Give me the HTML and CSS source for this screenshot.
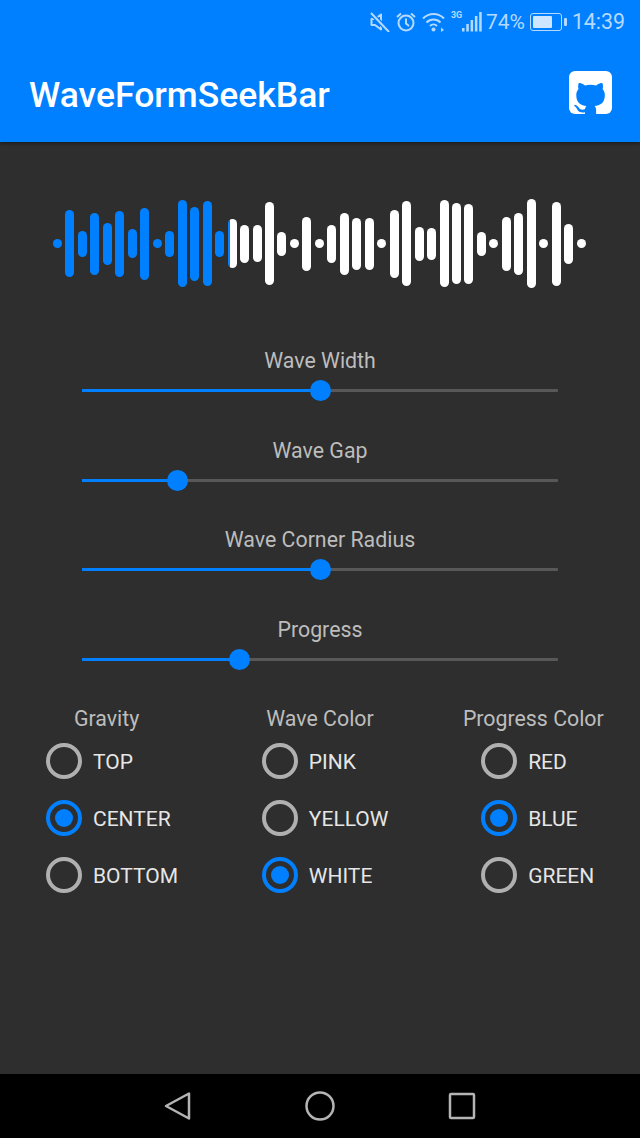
FILE: index.html
```html
<!DOCTYPE html>
<html lang="en">
<head>
  <meta charset="UTF-8">
  <title>WaveFormSeekBar</title>
  <link rel="stylesheet" href="styles.css">
</head>
<body>
  <div class="app">
    <div class="status-bar">
      <svg class="status-icon" width="20" height="20" viewBox="0 0 20 20" fill="none" stroke="currentColor" stroke-width="2">
        <path d="M1.500 7v6h3.500l6 4.500V2.500l-6 4.500z" stroke-linejoin="round"/>
        <path d="M1 1l18 19" stroke="#0080ff" stroke-width="4.500"/>
        <path d="M1 1l18 19"/>
      </svg>
      <svg class="status-icon" width="20" height="20" viewBox="0 0 20 20" fill="none" stroke="currentColor" stroke-width="2">
        <circle cx="10" cy="11" r="7.500"/>
        <path d="M10 6.500V11.500l3 2.500"/>
        <path d="M1 5l4-3.500M19 5l-4-3.500"/>
      </svg>
      <svg class="status-icon" width="23" height="20" viewBox="0 0 23 20" fill="none" stroke="currentColor" stroke-width="2">
        <path d="M1 6.500c6-6 15-6 21 0"/>
        <path d="M4.500 10.500c4-4 10-4 14 0"/>
        <path d="M8 14c2-2 5-2 7 0"/>
        <circle cx="11.500" cy="17.500" r="2" fill="currentColor" stroke="none"/>
        <path d="M19 15.500l3 2.500-3 2z" fill="currentColor" stroke="none"/>
      </svg>
      <div class="net">
        <span class="net-label">3G</span>
        <svg width="20" height="20" viewBox="0 0 20 20" fill="currentColor">
          <rect x="0" y="16" width="2.500" height="3.500"/>
          <rect x="4.300" y="12" width="2.500" height="7.500"/>
          <rect x="8.600" y="8" width="2.500" height="11.500"/>
          <rect x="12.900" y="4" width="2.500" height="15.500"/>
          <rect x="17.200" y="0" width="2.500" height="19.500"/>
        </svg>
      </div>
      <span class="battery-pct">74%</span>
      <div class="battery">
        <div class="battery-body"><div class="battery-level"></div></div>
        <div class="battery-nub"></div>
      </div>
      <span class="clock">14:39</span>
    </div>

    <div class="toolbar">
      <h1>WaveFormSeekBar</h1>
      <svg class="github" width="43" height="43" viewBox="0 0 43 43">
        <rect width="43" height="43" rx="6" fill="#fff"/>
        <path transform="translate(-0.9 2.84) scale(2.8)" fill="#0080ff" d="M6.010 17V13.720c-2.010.37-2.530-.49-2.690-.94-.09-.23-.48-.94-.82-1.130-.28-.15-.68-.52-.01-.53.63-.01 1.080.58 1.230.82.72 1.210 1.870.87 2.330.66.070-.52.280-.87.510-1.070-1.780-.2-3.640-.89-3.640-3.950 0-.87.310-1.590.82-2.150-.08-.2-.36-1.020.08-2.120 0 0 .67-.21 2.200.82.640-.18 1.320-.27 2-.27.680 0 1.360.09 2 .27 1.530-1.040 2.200-.82 2.200-.82.440 1.100.160 1.920.080 2.120.510.560.820 1.270.820 2.150 0 3.070-1.870 3.750-3.650 3.950.290.250.540.730.540 1.480V17z"/>
      </svg>
    </div>

    <div class="content">
      <div class="wave">
        <span class="bar played" style="height:9px"></span>
        <span class="bar played" style="height:67px"></span>
        <span class="bar played" style="height:26px"></span>
        <span class="bar played" style="height:62px"></span>
        <span class="bar played" style="height:42px"></span>
        <span class="bar played" style="height:66px"></span>
        <span class="bar played" style="height:29px"></span>
        <span class="bar played" style="height:72px"></span>
        <span class="bar played" style="height:9px"></span>
        <span class="bar played" style="height:26px"></span>
        <span class="bar played" style="height:87px"></span>
        <span class="bar played" style="height:74px"></span>
        <span class="bar played" style="height:85px"></span>
        <span class="bar played" style="height:26px"></span>
        <span class="bar current" style="height:49px"></span>
        <span class="bar" style="height:38px"></span>
        <span class="bar" style="height:37px"></span>
        <span class="bar" style="height:83px"></span>
        <span class="bar" style="height:24px"></span>
        <span class="bar" style="height:9px"></span>
        <span class="bar" style="height:54px"></span>
        <span class="bar" style="height:9px"></span>
        <span class="bar" style="height:38px"></span>
        <span class="bar" style="height:62px"></span>
        <span class="bar" style="height:52px"></span>
        <span class="bar" style="height:52px"></span>
        <span class="bar" style="height:9px"></span>
        <span class="bar" style="height:68px"></span>
        <span class="bar" style="height:85px"></span>
        <span class="bar" style="height:34px"></span>
        <span class="bar" style="height:32px"></span>
        <span class="bar" style="height:87px"></span>
        <span class="bar" style="height:81px"></span>
        <span class="bar" style="height:80px"></span>
        <span class="bar" style="height:24px"></span>
        <span class="bar" style="height:9px"></span>
        <span class="bar" style="height:54px"></span>
        <span class="bar" style="height:62px"></span>
        <span class="bar" style="height:89px"></span>
        <span class="bar" style="height:9px"></span>
        <span class="bar" style="height:84px"></span>
        <span class="bar" style="height:40px"></span>
        <span class="bar" style="height:9px"></span>
      </div>

      <div class="sliders">
        <div class="slider">
          <div class="slider-label">Wave Width</div>
          <div class="track"><div class="track-fill" style="width:50%"><span class="thumb"></span></div></div>
        </div>
        <div class="slider">
          <div class="slider-label">Wave Gap</div>
          <div class="track"><div class="track-fill" style="width:20%"><span class="thumb"></span></div></div>
        </div>
        <div class="slider">
          <div class="slider-label">Wave Corner Radius</div>
          <div class="track"><div class="track-fill" style="width:50%"><span class="thumb"></span></div></div>
        </div>
        <div class="slider">
          <div class="slider-label">Progress</div>
          <div class="track"><div class="track-fill" style="width:33%"><span class="thumb"></span></div></div>
        </div>
      </div>

      <div class="options">
        <div class="option-col">
          <div class="option-title">Gravity</div>
          <div class="radio-group group-gravity">
            <div class="radio"><span class="radio-mark"></span><span class="radio-text">TOP</span></div>
            <div class="radio checked"><span class="radio-mark"></span><span class="radio-text">CENTER</span></div>
            <div class="radio"><span class="radio-mark"></span><span class="radio-text">BOTTOM</span></div>
          </div>
        </div>
        <div class="option-col">
          <div class="option-title">Wave Color</div>
          <div class="radio-group group-wave">
            <div class="radio"><span class="radio-mark"></span><span class="radio-text">PINK</span></div>
            <div class="radio"><span class="radio-mark"></span><span class="radio-text">YELLOW</span></div>
            <div class="radio checked"><span class="radio-mark"></span><span class="radio-text">WHITE</span></div>
          </div>
        </div>
        <div class="option-col">
          <div class="option-title">Progress Color</div>
          <div class="radio-group group-progress">
            <div class="radio"><span class="radio-mark"></span><span class="radio-text">RED</span></div>
            <div class="radio checked"><span class="radio-mark"></span><span class="radio-text">BLUE</span></div>
            <div class="radio"><span class="radio-mark"></span><span class="radio-text">GREEN</span></div>
          </div>
        </div>
      </div>
    </div>

    <div class="nav-bar">
      <svg width="28" height="30" viewBox="0 0 28 30" fill="none" stroke="#b4b4b4" stroke-width="2.500" stroke-linejoin="round">
        <path d="M25 2.500V27.500L2 15z"/>
      </svg>
      <svg width="30" height="30" viewBox="0 0 30 30" fill="none" stroke="#b4b4b4" stroke-width="2.500">
        <circle cx="15" cy="15" r="13.500"/>
      </svg>
      <svg width="28" height="28" viewBox="0 0 28 28" fill="none" stroke="#b4b4b4" stroke-width="2.500" stroke-linejoin="round">
        <rect x="2" y="2" width="24" height="24" rx="1"/>
      </svg>
    </div>
  </div>
</body>
</html>
```

FILE: styles.css
```css
* { box-sizing: border-box; }
body { margin: 0; padding: 0; background: #2e2e2e; font-family: Roboto, "Liberation Sans", sans-serif; }
.app { width: 640px; height: 1138px; display: flex; flex-direction: column; overflow: hidden; }

.status-bar { height: 48px; background: #0080ff; color: #b5d9ff; display: flex; align-items: center; padding: 0 15px 4px 0; justify-content: flex-end; }
.status-bar svg { display: block; flex: none; }
.status-icon { margin-right: 6px; }
.net { position: relative; width: 31px; display: flex; justify-content: flex-end; }
.net-label { position: absolute; left: 0; top: -2px; font-size: 9px; font-weight: 700; line-height: 11px; }
.battery-pct { font-size: 21px; line-height: 24px; margin-left: 4px; }
.battery { display: flex; align-items: center; margin-left: 5px; }
.battery-body { width: 32px; height: 18px; border: 1.5px solid #b5d9ff; border-radius: 3px; padding: 2px; }
.battery-level { width: 74%; height: 100%; background: #cfe6ff; border-radius: 1px; }
.battery-nub { width: 3px; height: 8px; background: #b5d9ff; margin-left: 2px; border-radius: 1px; }
.clock { font-size: 21.33px; line-height: 24px; margin-left: 5px; }

.toolbar { height: 94px; background: #0080ff; display: flex; align-items: center; justify-content: space-between; padding: 0 28px 0 29px; box-shadow: 0 2px 3px rgba(0, 0, 0, .35); position: relative; }
.toolbar h1 { margin: 0; color: #fff; font-size: 35.5px; font-weight: 500; line-height: 40px; }
.github { display: block; margin-bottom: 5px; }

.content { flex: 1; }

.wave { height: 89px; margin: 57px 54px 0 53px; display: flex; align-items: center; justify-content: space-between; }
.bar { width: 9px; border-radius: 4.5px; background: #fff; flex: none; }
.bar.played { background: #0080ff; }
.bar.current { background: linear-gradient(90deg, #0080ff 2px, #fff 2px); }

.sliders { margin: 61px 82px 0; display: flex; flex-direction: column; gap: 37.5px; }
.slider-label { color: #bdbdbd; font-size: 21.33px; line-height: 24px; text-align: center; }
.track { margin-top: 16px; height: 3px; margin-bottom: 9px; background: #585858; border-radius: 1px; }
.track-fill { height: 100%; background: #0080ff; position: relative; }
.thumb { position: absolute; right: -10.5px; top: -9px; width: 21px; height: 21px; border-radius: 50%; background: #0080ff; }

.options { margin-top: 37px; display: grid; grid-template-columns: repeat(3, 1fr); }
.option-title { color: #bdbdbd; font-size: 21.33px; line-height: 24px; text-align: center; margin-bottom: 12px; }
.radio-group { display: flex; flex-direction: column; gap: 21px; }
.group-gravity { padding-left: 46px; }
.group-wave { padding-left: 48.5px; }
.group-progress { padding-left: 54.5px; }
.radio { display: flex; align-items: center; height: 36px; color: #e6e6e6; font-size: 21px; gap: 11px; }
.radio-text { padding-top: 2px; }
.radio-mark { width: 36px; height: 36px; border: 4px solid #b0b0b0; border-radius: 50%; display: flex; align-items: center; justify-content: center; flex: none; }
.radio.checked .radio-mark { border-color: #0080ff; }
.radio.checked .radio-mark::after { content: ""; width: 18px; height: 18px; border-radius: 50%; background: #0080ff; }

.nav-bar { height: 64px; background: #000; display: flex; align-items: center; justify-content: center; gap: 113px; }
.nav-bar svg { display: block; }
```
